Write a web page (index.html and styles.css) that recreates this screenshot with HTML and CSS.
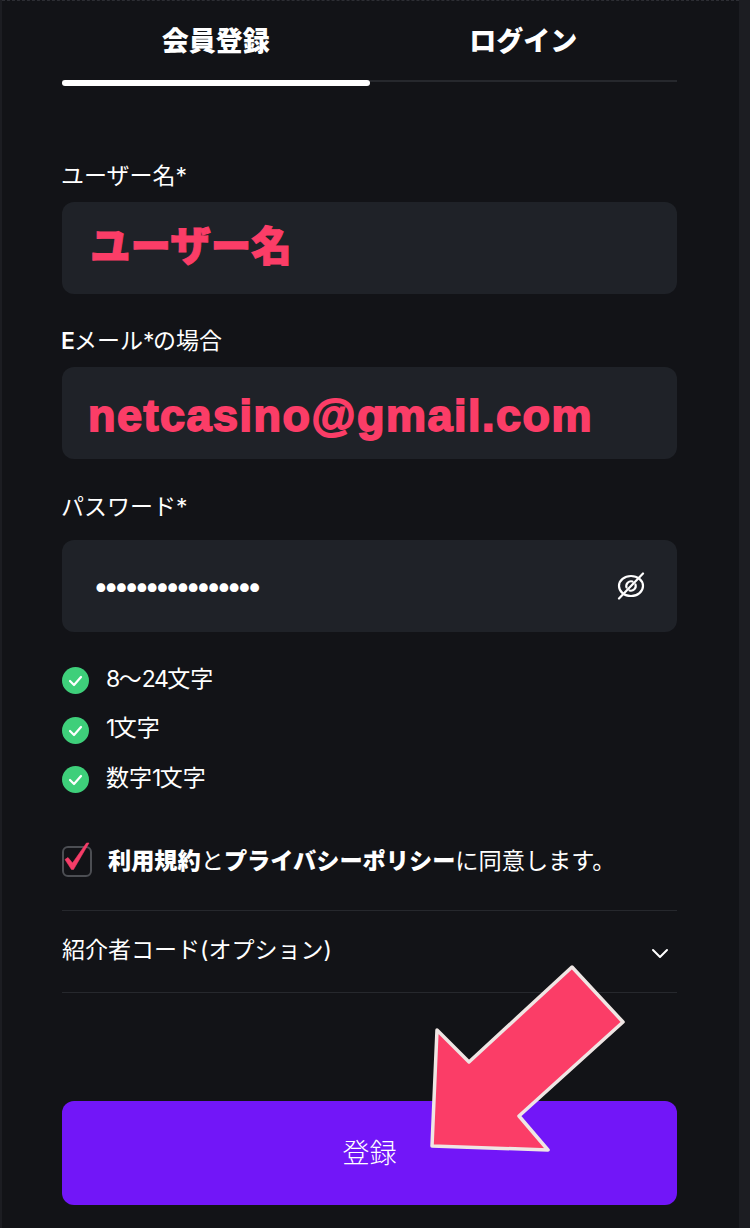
FILE: index.html
```html
<!DOCTYPE html>
<html lang="ja">
<head>
<meta charset="utf-8">
<title>会員登録</title>
<link rel="stylesheet" href="styles.css">
</head>
<body>
<main class="panel">
  <nav class="tabs">
    <a class="tab active">会員登録</a>
    <a class="tab">ログイン</a>
  </nav>
  <form class="form">
    <div class="field">
      <label class="label">ユーザー名<span class="num">*</span></label>
      <div class="input"><span class="typed typed-jp">ユーザー名</span></div>
    </div>
    <div class="field">
      <label class="label"><span class="strong-e">E</span>メール<span class="num">*</span>の場合</label>
      <div class="input"><span class="typed typed-mail">netcasino@gmail.com</span></div>
    </div>
    <div class="field">
      <label class="label">パスワード<span class="num">*</span></label>
      <div class="input input-pass">
        <span class="dots">••••••••••••••••</span>
        <svg class="eye" viewBox="0 0 28 28" fill="none" stroke="#fff" stroke-width="2.2" stroke-linecap="round"><ellipse cx="14" cy="14" rx="12" ry="10"/><path d="M9.5 15.5a4.8 4.8 0 0 1 6-6M18.5 12.5a4.8 4.8 0 0 1-6 6"/><path d="M26 1.5 2 26.5"/></svg>
      </div>
    </div>
    <ul class="rules">
      <li class="rule"><svg class="ok" viewBox="0 0 27 27"><circle cx="13.5" cy="13.5" r="13.5" fill="#3ecf7a"/><path d="M8 14l4 4 7-8" fill="none" stroke="#fff" stroke-width="2.2" stroke-linecap="round" stroke-linejoin="round"/></svg><span class="rule-text"><span class="num">8</span>～<span class="num">24</span>文字</span></li>
      <li class="rule"><svg class="ok" viewBox="0 0 27 27"><circle cx="13.5" cy="13.5" r="13.5" fill="#3ecf7a"/><path d="M8 14l4 4 7-8" fill="none" stroke="#fff" stroke-width="2.2" stroke-linecap="round" stroke-linejoin="round"/></svg><span class="rule-text"><span class="num">1</span>文字</span></li>
      <li class="rule"><svg class="ok" viewBox="0 0 27 27"><circle cx="13.5" cy="13.5" r="13.5" fill="#3ecf7a"/><path d="M8 14l4 4 7-8" fill="none" stroke="#fff" stroke-width="2.2" stroke-linecap="round" stroke-linejoin="round"/></svg><span class="rule-text">数字<span class="num">1</span>文字</span></li>
    </ul>
    <div class="agree">
      <span class="box"><svg class="tick" viewBox="0 0 26 32"><path d="M1 19.5 4 17.5 8.5 23 22.5 3 25 3 9.5 29.5 7.5 29.5Z" fill="#f53d68" stroke="#f53d68" stroke-width="0.6" stroke-linejoin="round"/></svg></span>
      <p class="agree-text"><b>利用規約</b>と<b>プライバシーポリシー</b>に同意します。</p>
    </div>
    <div class="referral">
      <span class="referral-text">紹介者コード(オプション)</span>
      <svg class="chev" viewBox="0 0 18 12" fill="none" stroke="#fff" stroke-width="2" stroke-linecap="round" stroke-linejoin="round"><path d="M2 2l7 7 7-7"/></svg>
    </div>
    <button class="submit" type="button">登録</button>
  </form>
</main>
<svg class="arrow" viewBox="0 0 750 1228"><path d="M572 967 L623 1022 L519 1116 L548 1150 L432 1146 L437 1030 L469 1062 Z" fill="#fb3d67" stroke="#efe6e4" stroke-width="3.5" stroke-linejoin="round"/></svg>
</body>
</html>
```

FILE: styles.css
```css
* { box-sizing: border-box; }
html, body { margin: 0; padding: 0; }
body {
  width: 750px;
  height: 1228px;
  overflow: hidden;
  background: #1c1d22;
  color: #fff;
  font-family: "Inter", "Noto Sans CJK JP", sans-serif;
  position: relative;
}
.panel {
  width: 737px;
  height: 1228px;
  margin-left: 2px;
  padding: 0 62px 0 60px;
  background: #121317;
  border-top: 1px dashed #2d2e34;
}
.tabs { display: flex; height: 85px; position: relative; }
.tabs::after {
  content: "";
  position: absolute;
  left: 0;
  right: 0;
  top: 79px;
  height: 2px;
  background: #26282d;
}
.tab {
  flex: 1;
  text-align: center;
  font-size: 27px;
  font-weight: 900;
  line-height: 40px;
  padding-top: 21px;
  position: relative;
  z-index: 1;
}
.tab.active::after {
  content: "";
  position: absolute;
  left: 0;
  right: 0;
  top: 79px;
  height: 6px;
  border-radius: 3px;
  background: #fff;
}
.field { margin-top: 0; }
.label {
  display: block;
  font-size: 23px;
  line-height: 34px;
  height: 32px;
  margin-left: -1px;
}
.field:nth-child(2) .label { line-height: 32px; }
.num { letter-spacing: -1.5px; }
.strong-e { font-weight: 600; letter-spacing: -1px; }
.input {
  height: 92px;
  background: #1f2228;
  border-radius: 12px;
  display: flex;
  align-items: center;
  padding: 0 28px;
}
.field:nth-child(1) { padding-top: 73px; }
.field:nth-child(1) .label { margin-bottom: 11px; }
.field:nth-child(2) { padding-top: 31px; }
.field:nth-child(2) .label { margin-bottom: 10px; }
.field:nth-child(3) { padding-top: 31px; }
.field:nth-child(3) .label { margin-bottom: 18px; }
.typed { color: #fb3d67; font-weight: 700; }
.typed-jp {
  font-size: 40.5px;
  font-weight: 900;
  margin-bottom: 10px;
  -webkit-text-stroke: 1px #fb3d67;
}
.typed-mail {
  font-family: "Liberation Sans", sans-serif;
  font-size: 45px;
  margin: 5px 0 0 -2px;
  letter-spacing: 1.5px;
  -webkit-text-stroke: 1.8px #fb3d67;
}
.input-pass { justify-content: space-between; padding: 0 32px 0 31px; }
.dots { font-size: 28px; letter-spacing: -5.5px; }
.eye { width: 28px; height: 28px; }
.rules { list-style: none; margin: 35px 0 0; padding: 0; }
.rule {
  display: flex;
  align-items: center;
  gap: 17px;
  height: 27px;
  font-size: 23px;
  margin-bottom: 22.5px;
}
.rule-text { margin-bottom: 8px; }
.ok { width: 27px; height: 27px; flex: none; }
.agree { display: flex; align-items: center; gap: 16px; margin-top: 51px; height: 34px; }
.box {
  width: 30px;
  height: 31px;
  border: 2px solid #4c4e53;
  border-radius: 6px;
  position: relative;
  flex: none;
}
.tick { position: absolute; left: 0; top: -8px; width: 26px; height: 32px; }
.agree-text { margin: 0 0 5px; font-size: 23.2px; white-space: nowrap; }
.agree-text b { font-weight: 900; }
.referral {
  margin-top: 32px;
  height: 83px;
  border-top: 1px solid #26282d;
  border-bottom: 1px solid #26282d;
  display: flex;
  align-items: center;
  justify-content: space-between;
  font-size: 23px;
  padding-right: 8px;
}
.referral-text { margin-bottom: 8px; }
.chev { width: 18px; height: 12px; margin-top: 4px; }
.submit {
  display: block;
  width: 100%;
  height: 104px;
  margin-top: 108px;
  padding-bottom: 4px;
  border: 0;
  border-radius: 12px;
  background: #7216f8;
  color: #fff;
  font: inherit;
  font-size: 27px;
  font-weight: 300;
}
.arrow { position: absolute; left: 0; top: 0; width: 750px; height: 1228px; pointer-events: none; }
```
